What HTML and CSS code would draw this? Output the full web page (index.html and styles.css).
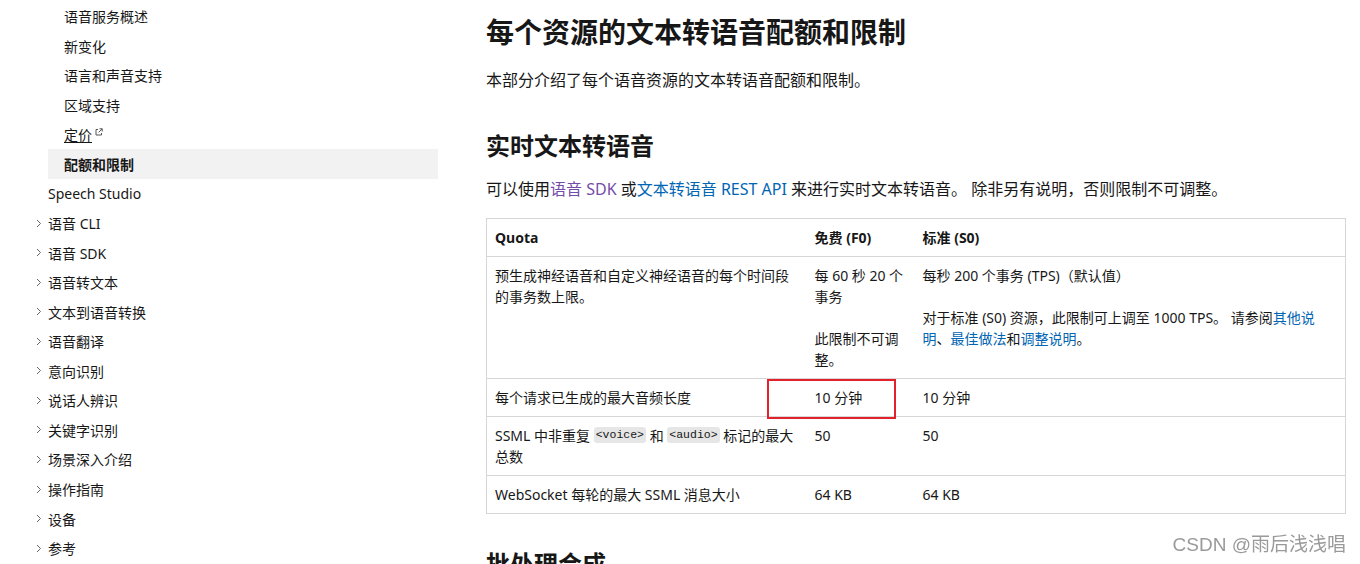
FILE: index.html
```html
<!DOCTYPE html>
<html lang="zh-CN">
<head>
<meta charset="utf-8">
<title>每个资源的文本转语音配额和限制</title>
<link rel="stylesheet" href="styles.css">
</head>
<body>
<div class="page">
  <nav class="toc">
    <ul class="sub">
      <li>语音服务概述</li>
      <li>新变化</li>
      <li>语言和声音支持</li>
      <li>区域支持</li>
      <li><span class="ext">定价</span><svg class="ext-icon" width="8" height="8" viewBox="0 0 8 8"><path d="M3 1.5H1V7h5.5V5" fill="none" stroke="#555" stroke-width="1"/><path d="M4.5 0.8H7.2V3.5M7.2 0.8L3.6 4.4" fill="none" stroke="#555" stroke-width="1"/></svg></li>
      <li class="active">配额和限制</li>
    </ul>
    <ul class="top">
      <li><span class="chev"></span>Speech Studio</li>
      <li><span class="chev"><svg width="6" height="9" viewBox="0 0 6 9"><path d="M1 1l3.5 3.5L1 8" fill="none" stroke="#666" stroke-width="1"/></svg></span>语音 CLI</li>
      <li><span class="chev"><svg width="6" height="9" viewBox="0 0 6 9"><path d="M1 1l3.5 3.5L1 8" fill="none" stroke="#666" stroke-width="1"/></svg></span>语音 SDK</li>
      <li><span class="chev"><svg width="6" height="9" viewBox="0 0 6 9"><path d="M1 1l3.5 3.5L1 8" fill="none" stroke="#666" stroke-width="1"/></svg></span>语音转文本</li>
      <li><span class="chev"><svg width="6" height="9" viewBox="0 0 6 9"><path d="M1 1l3.5 3.5L1 8" fill="none" stroke="#666" stroke-width="1"/></svg></span>文本到语音转换</li>
      <li><span class="chev"><svg width="6" height="9" viewBox="0 0 6 9"><path d="M1 1l3.5 3.5L1 8" fill="none" stroke="#666" stroke-width="1"/></svg></span>语音翻译</li>
      <li><span class="chev"><svg width="6" height="9" viewBox="0 0 6 9"><path d="M1 1l3.5 3.5L1 8" fill="none" stroke="#666" stroke-width="1"/></svg></span>意向识别</li>
      <li><span class="chev"><svg width="6" height="9" viewBox="0 0 6 9"><path d="M1 1l3.5 3.5L1 8" fill="none" stroke="#666" stroke-width="1"/></svg></span>说话人辨识</li>
      <li><span class="chev"><svg width="6" height="9" viewBox="0 0 6 9"><path d="M1 1l3.5 3.5L1 8" fill="none" stroke="#666" stroke-width="1"/></svg></span>关键字识别</li>
      <li><span class="chev"><svg width="6" height="9" viewBox="0 0 6 9"><path d="M1 1l3.5 3.5L1 8" fill="none" stroke="#666" stroke-width="1"/></svg></span>场景深入介绍</li>
      <li><span class="chev"><svg width="6" height="9" viewBox="0 0 6 9"><path d="M1 1l3.5 3.5L1 8" fill="none" stroke="#666" stroke-width="1"/></svg></span>操作指南</li>
      <li><span class="chev"><svg width="6" height="9" viewBox="0 0 6 9"><path d="M1 1l3.5 3.5L1 8" fill="none" stroke="#666" stroke-width="1"/></svg></span>设备</li>
      <li><span class="chev"><svg width="6" height="9" viewBox="0 0 6 9"><path d="M1 1l3.5 3.5L1 8" fill="none" stroke="#666" stroke-width="1"/></svg></span>参考</li>
    </ul>
  </nav>

  <main class="content">
    <h1>每个资源的文本转语音配额和限制</h1>
    <p class="lead">本部分介绍了每个语音资源的文本转语音配额和限制。</p>
    <h2>实时文本转语音</h2>
    <p class="lead-2">可以使用<a class="visited" href="#">语音 SDK</a> 或<a href="#">文本转语音 REST API</a> 来进行实时文本转语音。 除非另有说明，否则限制不可调整。</p>

    <div class="table-wrap">
      <table class="quota">
        <colgroup>
          <col class="c1"><col class="c2"><col class="c3">
        </colgroup>
        <thead>
          <tr><th>Quota</th><th>免费 (F0)</th><th>标准 (S0)</th></tr>
        </thead>
        <tbody>
          <tr>
            <td>预生成神经语音和自定义神经语音的每个时间段的事务数上限。</td>
            <td><p>每 60 秒 20 个事务</p><p>此限制不可调整。</p></td>
            <td><p>每秒 200 个事务 (TPS)（默认值）</p><p>对于标准 (S0) 资源，此限制可上调至 1000 TPS。 请参阅<a href="#">其他说明</a>、<a href="#">最佳做法</a>和<a href="#">调整说明</a>。</p></td>
          </tr>
          <tr>
            <td>每个请求已生成的最大音频长度</td>
            <td>10 分钟</td>
            <td>10 分钟</td>
          </tr>
          <tr>
            <td>SSML 中非重复 <code>&lt;voice&gt;</code> 和 <code>&lt;audio&gt;</code> 标记的最大总数</td>
            <td>50</td>
            <td>50</td>
          </tr>
          <tr>
            <td>WebSocket 每轮的最大 SSML 消息大小</td>
            <td>64 KB</td>
            <td>64 KB</td>
          </tr>
        </tbody>
      </table>
      <div class="mark"></div>
    </div>

    <h2 class="next">批处理合成</h2>
  </main>
</div>
<div class="watermark">CSDN @雨后浅浅唱</div>
</body>
</html>
```

FILE: styles.css
```css
html, body {
  margin: 0;
  padding: 0;
  height: 564px;
  overflow: hidden;
  background: #ffffff;
}

body {
  font-family: "Segoe UI", "Noto Sans", "Noto Sans CJK SC", sans-serif;
  color: #171717;
}

.page {
  display: grid;
  grid-template-columns: 438px 860px;
  column-gap: 48px;
}

/* ---------- sidebar ---------- */
.toc {
  padding-top: 1.5px;
  font-size: 14px;
}

.toc ul {
  list-style: none;
  margin: 0;
  padding: 0;
}

.toc li {
  height: 29.56px;
  display: flex;
  align-items: center;
  white-space: nowrap;
}

.toc .sub {
  margin-left: 48px;
}

.toc .sub li {
  padding-left: 16px;
}

.toc .sub li.active {
  background: #f2f2f2;
  font-weight: 700;
}

.toc .ext {
  text-decoration: underline;
  text-underline-offset: 2px;
}

.toc .ext-icon {
  margin-left: 3px;
  margin-top: -4px;
}

.toc .top li {
  padding-left: 32px;
}

.toc .chev {
  width: 16px;
  display: flex;
  align-items: center;
}

.toc .chev svg {
  margin-left: 4px;
}

/* ---------- content ---------- */
.content {
  padding-top: 14px;
}

.content h1 {
  margin: 0;
  font-size: 28px;
  line-height: 36px;
  font-weight: 700;
}

.content p.lead {
  margin: 18px 0 0;
  font-size: 16px;
  line-height: 24px;
}

.content h2 {
  margin: 38px 0 0;
  font-size: 24px;
  line-height: 32px;
  font-weight: 700;
}

.content p.lead-2 {
  margin: 15px 0 0;
  font-size: 16px;
  line-height: 24px;
}

.content h2.next {
  margin-top: 34px;
}

a {
  color: #0065b3;
  text-decoration: none;
}

a.visited {
  color: #744da9;
}

.table-wrap {
  position: relative;
  margin-top: 17px;
}

.quota {
  width: 860px;
  table-layout: fixed;
  border-collapse: collapse;
  border: 1px solid #d6d6d6;
  font-size: 14px;
  line-height: 21px;
}

.quota col.c1 { width: 320px; }
.quota col.c2 { width: 108px; }

.quota th,
.quota td {
  padding: 8px;
  text-align: left;
  vertical-align: top;
  border-top: 1px solid #d6d6d6;
}

.quota th {
  font-weight: 700;
}

.quota td p {
  margin: 0;
}

.quota td p + p {
  margin-top: 21px;
}

.quota code {
  display: inline-block;
  font-family: "Liberation Mono", monospace;
  font-size: 11.5px;
  line-height: 16px;
  vertical-align: top;
  margin-top: 2px;
  background: #e6e6e6;
  padding: 0 2px;
  border-radius: 3px;
}

.mark {
  position: absolute;
  left: 281px;
  top: 161px;
  width: 125px;
  height: 36px;
  border: 2px solid #e3212b;
}

.watermark {
  position: fixed;
  right: 14px;
  bottom: 7px;
  font-family: "Liberation Sans", "Noto Sans CJK SC", sans-serif;
  font-size: 19px;
  line-height: 24px;
  color: #9a9a9a;
}
```
